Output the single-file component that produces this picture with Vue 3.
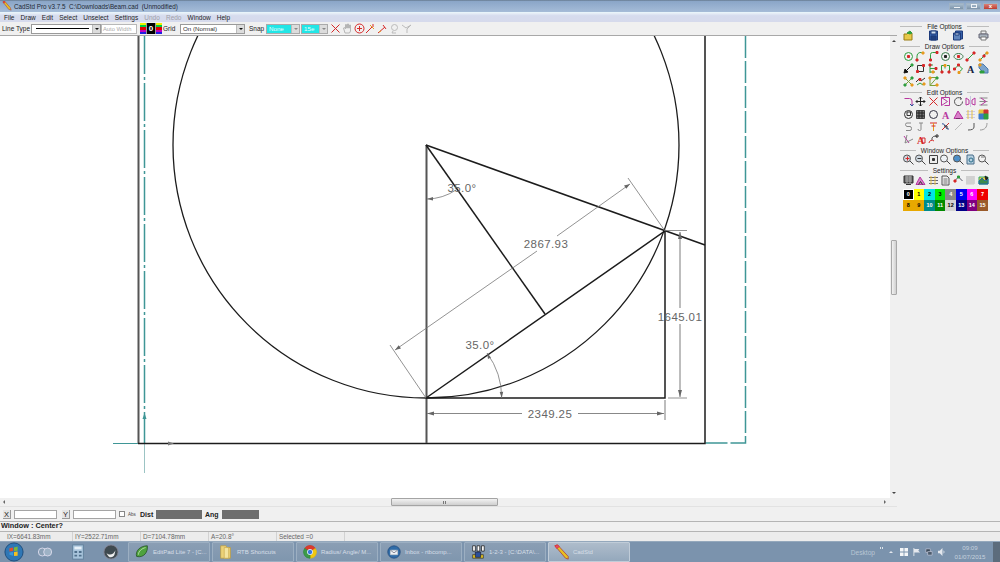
<template>
  <div class="app">
    <div class="titlebar">
      <svg class="title-icon" viewBox="0 0 12 12"><path d="M1 1l2-1 7 8 1 3-3-1z" fill="#e8c020" stroke="#a33" stroke-width=".6" /><path d="M1 1l2-1 1 1.500-2 1.500z" fill="#d33" /></svg>
      <span class="title-text">CadStd Pro v3.7.5&nbsp; C:\Downloads\Beam.cad&nbsp; (Unmodified)</span>
      <div class="win-btns">
        <span class="win-btn"><i class="win-min" /></span>
        <span class="win-btn"><i class="win-max" /></span>
        <span class="win-btn win-close">x</span>
      </div>
    </div>

    <div class="menubar">
      <span v-for="m in menus" :key="m.name" class="menu-item" :class="{ 'menu-item--off': m.off }">{{ m.name }}</span>
    </div>

    <div class="middle">
      <div class="left-col">
        <div class="toolbar">
          <span class="tb-label tb-line">Line Type</span>
          <div class="combo combo--line"><i class="thick-line" /><b class="combo-arrow" /></div>
          <div class="auto-width">Auto Width</div>
          <div class="color-btn">
            <i class="rainbow" /><b class="color-zero">0</b><i class="rainbow" />
          </div>
          <span class="tb-label tb-grid">Grid</span>
          <div class="combo combo--grid"><span>On (Normal)</span><b class="combo-arrow" /></div>
          <span class="tb-label tb-snap">Snap</span>
          <div class="combo combo--cyan combo--none"><span>None</span><b class="combo-arrow combo-arrow--pale" /></div>
          <div class="combo combo--cyan combo--deg"><span>15e</span><b class="combo-arrow combo-arrow--pale" /></div>
          <div class="tb-icons">
            <svg v-for="(ic, i) in toolIcons" :key="i" class="icon" viewBox="0 0 11 11">
              <path v-for="(p, j) in ic" :key="j" :d="p[0]" :stroke="p[1]" :fill="p[2] || 'none'" />
            </svg>
          </div>
        </div>

        <div class="canvas-row">
          <svg class="canvas" viewBox="0 36 890 462">
            <!-- construction lines -->
            <g fill="none" stroke="#3f9696" stroke-width="1.500">
              <path d="M144.500 36V443" stroke-dasharray="38 3 3 3" />
              <path d="M745.500 36V443H705" stroke-dasharray="22 3" />
              <path d="M113 443.500H138" stroke-width="1" />
              <path d="M144.500 443V473" stroke="#9cc4c4" stroke-width="1" />
            </g>
            <!-- beam -->
            <g fill="none" stroke="#1c1c1c" stroke-width="1.500">
              <path d="M138.500 36V443" stroke="#555" stroke-width="2" />
              <path d="M705 36V443.500H138" />
              <path d="M426.500 145V443" stroke="#555" stroke-width="2" />
              <circle cx="426" cy="145" r="253" stroke-width="1.300" />
              <path d="M426 145L705 245" />
              <path d="M426 398L665 231V398H426" />
              <path d="M426 145L545 314" />
            </g>
            <!-- dimensions -->
            <g fill="none" stroke="#777" stroke-width=".8">
              <path d="M630 184L557 236M537 251L395 350" />
              <path d="M628 178L665 231M390 345L426 398" />
              <path d="M665 230.500H687M668 398H687" />
              <path d="M680 232V308M680 324V397" stroke="#888" stroke-width="1.100" />
              <path d="M427 413.500H522M578 413.500H664M665 400V420" stroke="#888" stroke-width="1.100" />
              <path d="M427 199A54 54 0 0 0 456 190" />
              <path d="M487 353A76 76 0 0 1 501.700 398" />
            </g>
            <g fill="#666">
              <path d="M427 413.500l7-2v4zM664 413.500l-7-2v4z" />
              <path d="M680 232l-2 7h4zM680 397l-2-7h4z" />
              <path d="M630 184l-6 1.500 2.300 3.300zM395 350l6-1.500-2.300-3.300z" />
              <path d="M427 199l6-2v3.500zM487 353l1 6 3-1.500zM501.700 398l-2-6 3.500-.3z" />
            </g>
            <g class="dim-text">
              <text x="546" y="248">2867.93</text>
              <text x="680" y="320.500">1645.01</text>
              <text x="550" y="417.500">2349.25</text>
              <text x="462" y="191.500">35.0°</text>
              <text x="480" y="349">35.0°</text>
            </g>
            <path d="M168 441.500l6 2-6 2z" fill="#777" />
            <path d="M144.500 413l-2 6h4z" fill="#3f9696" />
          </svg>
          <div class="vscroll">
            <b class="arrow-up" />
            <div class="vthumb" />
            <b class="arrow-down" />
          </div>
        </div>

        <div class="hscroll">
          <b class="arrow-left" />
          <div class="hthumb"><span /></div>
          <b class="arrow-right" />
        </div>
      </div>

      <aside class="panel">
        <section v-for="s in sections" :key="s.title" class="panel-sec">
          <h4 class="sec-title"><span>{{ s.title }}</span></h4>
          <div class="sec-icons">
            <svg v-for="(ic, i) in s.icons" :key="i" class="icon" viewBox="0 0 11 11">
              <template v-for="(p, j) in ic" :key="j">
                <text v-if="p[3]" class="icon-letter" x="5.500" y="9.500" :fill="p[1]">{{ p[3] }}</text>
                <path v-else :d="p[0]" :stroke="p[1]" :fill="p[2] || 'none'" />
              </template>
            </svg>
          </div>
        </section>
        <div class="palette">
          <span
            v-for="c in palette"
            :key="c.n"
            class="swatch"
            :class="{ 'swatch--active': c.n === 0 }"
            :style="{ background: c.bg, color: c.fg }"
          >{{ c.n }}</span>
        </div>
      </aside>
    </div>

    <div class="coordbar">
      <span class="xy-btn">X</span>
      <i class="xy-input" />
      <span class="xy-btn xy-btn--y">Y</span>
      <i class="xy-input" />
      <i class="abs-check" />
      <span class="abs-label">Abs</span>
      <b class="coord-label">Dist</b>
      <i class="readout readout--dist" />
      <b class="coord-label">Ang</b>
      <i class="readout readout--ang" />
    </div>

    <div class="prompt">Window : Center?</div>

    <div class="statusbar">
      <span v-for="c in statusCells" :key="c" class="status-cell">{{ c }}</span>
    </div>

    <div class="taskbar">
      <div class="start-orb"><svg viewBox="0 0 22 22"><circle cx="11" cy="11" r="10" fill="#2f77b5" stroke="#1c4a78" /><path d="M6 7l4-1v4l-4 .5z" fill="#e2502e" /><path d="M11 6l4-1v4.500l-4 .5z" fill="#7cb83c" /><path d="M6 11.500l4-.5v4l-4-1z" fill="#3a9ade" /><path d="M11 11l4-.5V15l-4 .5z" fill="#f4c020" /></svg></div>
      <div class="pinned"><svg viewBox="0 0 18 18"><circle cx="6" cy="9" r="4.500" fill="#8aa0b5" stroke="#dde" /><circle cx="12" cy="9" r="4.500" fill="#9db2c5" stroke="#dde" /></svg></div>
      <div class="pinned"><svg viewBox="0 0 18 18"><rect x="3" y="1" width="12" height="16" fill="#a8c4dc" stroke="#5f7f9a" /><rect x="5" y="3" width="8" height="3" fill="#e6f0f8" /><path d="M5 8h3v2H5zM10 8h3v2h-3zM5 12h3v2H5zM10 12h3v2h-3z" fill="#50708c" /></svg></div>
      <div class="pinned"><svg viewBox="0 0 18 18"><circle cx="9" cy="9" r="8" fill="#3f4a50" stroke="#889" /><path d="M4 10c3 3 8 2 10-3-1 5-1 7-5 8-2 0-4-2-5-5z" fill="#eee" /></svg></div>
      <div
        v-for="t in tasks"
        :key="t.label"
        class="task"
        :class="{ 'task--active': t.active }"
      >
        <svg class="task-icon" viewBox="0 0 18 18">
          <path v-for="(p, j) in t.icon" :key="j" :d="p[0]" :stroke="p[1]" :fill="p[2] || 'none'" />
        </svg>
        <span>{{ t.label }}</span>
      </div>
      <div class="tray">
        <span class="tray-desktop">Desktop</span>
        <i class="tray-grip" />
        <b class="tray-up" />
        <svg class="tray-icon" viewBox="0 0 9 9"><path d="M0 0h4v4H0zM5 0h4v4H5zM0 5h4v4H0zM5 5h4v4H5z" fill="#f4f6f8" /></svg>
        <svg class="tray-icon" viewBox="0 0 9 9"><path d="M1 0v9" stroke="#e4e8ee" /><path d="M1 1h6L6 3l2 2H1z" fill="#e4e8ee" /></svg>
        <svg class="tray-icon" viewBox="0 0 9 9"><path d="M1 1h5v4H1z" fill="#3c4c5c" stroke="#dde" stroke-width=".6" /><path d="M3 4h5v4H3z" fill="#4c5c6c" stroke="#dde" stroke-width=".6" /></svg>
        <svg class="tray-icon" viewBox="0 0 9 9"><path d="M0 3h2l3-3v9L2 6H0z" fill="#e4e8ee" /><path d="M6 3c1 1 1 2 0 3" stroke="#e4e8ee" fill="none" /></svg>
        <div class="clock"><span>09:09</span><span>01/07/2015</span></div>
        <i class="show-desktop" />
      </div>
    </div>
  </div>
</template>

<script setup>
const menus = [
  { name: 'File' }, { name: 'Draw' }, { name: 'Edit' }, { name: 'Select' }, { name: 'Unselect' },
  { name: 'Settings' }, { name: 'Undo', off: true }, { name: 'Redo', off: true }, { name: 'Window' }, { name: 'Help' },
]

const G = '#2f9e3f', R = '#d62828', O = '#e79a1e', M = '#b8379f', K = '#333', S = '#888', B = '#2a4f9a'

const mag = (inner, lens = '#cfd9e2') => [
  ['M7 7l3.500 3.500', '#444'],
  ['M7.500 4.500a3.500 3.500 0 1 1-7 0a3.500 3.500 0 1 1 7 0', '#555', lens],
  ...inner,
]

const toolIcons = [
  [['M1.500 1.500l8 8M9.500 1.500l-8 8', R]],
  [['M3 10L1.500 5l1-.5 1 1.500V1.500h1V5h1V1h1v4h1V2h1v6l-1 2z', '#b5b5b5']],
  [['M10 5.500a4.500 4.500 0 1 1-9 0a4.500 4.500 0 1 1 9 0', R], ['M5.500 3v5M3 5.500h5', R]],
  [['M1 10l6-6', R], ['M5 2l4 4', O], ['M8 1v3', R]],
  [['M1 10l7-6', R], ['M6 2l3 4', R], ['M2 9l2-1', O]],
  [['M8.500 4.500a3 3 0 1 1-6 0a3 3 0 1 1 6 0', '#bbb'], ['M4 8l-1 2h4', '#bbb']],
  [['M1 2l4 3 5-3-4 4v4', '#bbb']],
]

const sections = [
  {
    title: 'File Options',
    icons: [
      [['M1 4h3l1-1h4v7H1z', '#9a7d14', '#e8c94a'], ['M4 3l3-2 2 2-2 1z', G, G]],
      [],
      [['M1.500 1h8v9h-8z', '#1d3a7a', '#3560a8'], ['M3 1h5v3H3z', '#1d3a7a', '#cfe0f0'], ['M3 6h5v4H3z', '#1d3a7a', '#20407f']],
      [],
      [['M2.500 1h7v8h-7z', '#1d3a7a', '#3560a8'], ['M.5 3h7v7h-7z', '#1d3a7a', '#5f84bb'], ['M2 3h4v2H2z', '#1d3a7a', '#dce8f4']],
      [],
      [['M3 1h5v3H3z', '#777', '#eee'], ['M1 4h9v4H1z', '#667', '#a8b2bc'], ['M3 7h5v3H3z', '#777', '#fff']],
    ],
  },
  {
    title: 'Draw Options',
    icons: [
      [['M9.500 5.500a4 4 0 1 1-8 0a4 4 0 1 1 8 0', G], ['M4.500 4.500h2v2h-2z', R, R]],
      [['M2 9V5a3.500 3.500 0 0 1 6-2.500', G], ['M1 8h2v2H1z', R, R], ['M7 1h2v2H7z', O, O]],
      [['M2.500 9V3.500A2 2 0 0 1 4.500 1.500H8', G], ['M1.500 8h2v2h-2z', R, R], ['M8 .5h2v2H8z', R, R]],
      [['M9.500 5.500a4 4 0 1 1-8 0a4 4 0 1 1 8 0', '#3a7a4a'], ['M4.500 4.500h2v2h-2z', '#222', '#222']],
      [['M10 5.500c0 1.500-2 3-4.500 3S1 7 1 5.500s2-3 4.500-3 4.500 1.500 4.500 3', '#3a7a4a'], ['M4.500 4.500h2v2h-2z', R, R]],
      [['M2 9l7-7', G], ['M1 8h2v2H1z', R, R], ['M8 1h2v2H8z', R, R]],
      [['M1.500 9.500L5 6l1-2 3.500-2.500', G], ['M1 8h2v2H1z', O, O], ['M5 4h2v2H5z', R, R], ['M8 1h2v2H8z', O, O]],
      [['M9 2L3 8', '#111'], ['M1 10l1-4 3 3z', '#111', '#111'], ['M8 1h2v2H8z', G, G]],
      [['M2.500 2.500h6v6h-6z', K], ['M1.500 7.500h2v2h-2z', R, R], ['M7.500 1.500h2v2h-2z', R, R]],
      [['M2 1v9M2 2h3M2 5.500h6M2 9h5', G], ['M1 1h2v2H1zM7 4.500h2v2H7z', R, R], ['M4 8h2v2H4z', O, O]],
      [['M1.500 9V2.500h3.500v3M7 2.500h2.500V9', G], ['M1 8h2v2H1zM8 8h2v2H8z', R, R], ['M4 1.500h2v2H4z', O, O]],
      [['M1.500 6L5.500 2l4 4-4 3.500', G], ['M.5 5h2v2h-2zM4.500 1h2v2h-2z', R, R], ['M5 8.500h2v2H5z', O, O]],
      [['', '#16223f', '', 'A']],
      [['M1 1h4l5 5v4H6L1 5z', '#4a7ab0', '#7ca4cc'], ['M2 8h4v2H2z', G, G], ['M1 1h2v2H1z', O, O]],
      [['M1.500 9.500l8-8M1.500 1.500l8 8', '#7aa23c'], ['M1 1h2v2H1zM8 8h2v2H8z', O, O], ['M8 1h2v2H8zM1 8h2v2H1z', G, G]],
      [['M1 6l3-3 2 2 4-3', K], ['M2 9l3-2 3 2', G], ['M4 2.500h2v2H4z', R, R], ['M8 7h2v2H8z', O, O]],
      [['M2 1.500h7M2 9.500h7M2 1.500v8M9 1.500l-7 8', '#7aa23c'], ['M1 1h2v2H1zM8 8h2v2H8z', O, O], ['M8 1h2v2H8z', G, G]],
    ],
  },
  {
    title: 'Edit Options',
    icons: [
      [['M1.500 2.500h5a2.500 2.500 0 0 1 2.500 2.500V10', M], ['M7 8l2 2 1.500-2', '#2a4f9a']],
      [['M5.500 1v9M1 5.500h9M4 2.500L5.500 1 7 2.500M4 8.500L5.500 10 7 8.500M2.500 4L1 5.500 2.500 7M8.500 4L10 5.500 8.500 7', '#222']],
      [['M1.500 1.500l8 8M9.500 1.500l-8 8', R]],
      [['M1.500 1.500h8v8h-5', M], ['M1.500 1.500l6 4-6 4z', M]],
      [['M9.500 5.500a4 4 0 1 1-1.500-3', '#555'], ['M7 1l1.500 1.500-1 1.500', '#555']],
      [['M5.500 0v11', '#c7c7e0'], ['M1 2l3 2v4l-3 1z', M], ['M10 2L7 4v4l3 1z', M]],
      [['M1.500 2h8M1.500 5.500h8M1.500 9h8', S], ['M3 2l5 3.500L3 9', M]],
      [['M9.500 5.500a4 4 0 1 1-8 0a4 4 0 1 1 8 0', '#333'], ['M4 3h3.500v3.500H4z', '#333']],
      [['M1.500 1.500h8v8h-8z', '#444', '#777'], ['M1.500 4h8M1.500 7h8M4 1.500v8M7 1.500v8', '#222']],
      [['M9.500 5.500a4 4 0 1 1-8 0a4 4 0 1 1 8 0', '#334']],
      [['', M, '', 'A']],
      [['M1 9.500L5 2l5 7.500z', M, '#d97fc9'], ['M3 9.500h4', '#7b2a6c']],
      [['M1 2.500h9M1 5.500h9M1 8.500h9', '#c9c9ee'], ['M3 1v9M7 1v9', '#e6c040']],
      [['M1 1h5v4H1z', '#e6c040', '#e6c040'], ['M6 1h4v4H6z', '#c33', '#c33'], ['M1 5h5v5H1z', '#3c7ac8', '#3c7ac8'], ['M6 5h4v5H6z', G, G]],
      [['M8 2H4Q2.500 2 2.500 3.500T4 5.500h3Q8.500 5.500 8.500 7.500T7 9.500H3', S]],
      [['M4 2h4M6 2v6.500Q6 9.500 4.500 9.500T3 8', S]],
      [['M2 2h7', R], ['M5.500 2v8', O], ['M3.500 5h4', R]],
      [['M2 9L9 2', R], ['M2 3c3-2 3 6 7 5', B], ['M4 5h3v3', K]],
      [['M2 9L9 2', '#bbb']],
      [['M9 2v4Q9 9 3 9', '#555']],
      [['M9 2c0 4-2 7-7 7', '#999']],
      [['M1 2l5 7', M], ['M4 1l-2 8 8-4', S]],
      [['', R, '', 'A'], ['M7 4h3v5H7z', R]],
      [['M1 9a3 3 0 0 1 5-2', R], ['M4 6a3 3 0 0 1 5-3', '#555'], ['M8 1h2v2H8z', K]],
    ],
  },
  {
    title: 'Window Options',
    icons: [
      mag([['M2.500 4.500h4M4.500 2.500v4', R]]),
      mag([['M2.500 4.500h4', '#333']]),
      [['M1.500 1.500h8v8h-8z', '#444', '#eee'], ['M4.500 4.500h2v2h-2z', '#333', '#333']],
      mag([], '#eef2f6'),
      mag([], '#4e8fc8'),
      [['M2 1h6l1 2v7H2z', '#4a6e8a', '#b8d0e0'], ['M8 6a2 2 0 1 1-4 0a2 2 0 1 1 4 0', '#2a6e8a']],
      mag([['M3 3h3', '#777']], '#f2f2f2'),
    ],
  },
  {
    title: 'Settings',
    icons: [
      [['M1 1h9v7H1z', '#333', '#555'], ['M2 2h7M2 4h7M2 6h7M4 1v7M7 1v7', '#aaa'], ['M3 9.500h5', '#333']],
      [['M1 9.500L5 2l5 7.500z', M, '#d97fc9'], ['M3.500 9.500l2-3 2 3', '#333']],
      [['M1 2.500h9M1 5.500h9M1 8.500h9', '#667'], ['M3 1v9M7 1v9', '#e6c040']],
      [['M2 1h5l2 2v7H2z', '#555', '#eee'], ['M3.500 4h4M3.500 6h4M3.500 8h4', '#777']],
      [['M1.500 6L5.500 2l4 4', '#556'], ['M1 5h2v2H1z', R, R], ['M4.500 1h2v2h-2z', G, G]],
      [['M1 2h9M1 4h9M1 6h9M1 8h9', '#bbb'], ['M2 1v9M4 1v9M6 1v9M8 1v9', '#ccc']],
      [['M1 2h9v7H1z', '#3a6', '#e8d040'], ['M1 6l3-3 3 3 3-2v5H1z', '#26a', '#3c8a4a'], ['M7 1l3 2-2 2z', '#222', '#222']],
    ],
  },
]

const paletteColors = [
  ['#000', '#fff'], ['#ffff00', '#000'], ['#00e5e5', '#000'], ['#00ee00', '#000'],
  ['#8a8a8a', '#fff'], ['#0000ee', '#fff'], ['#ff00ff', '#fff'], ['#ee0000', '#fff'],
  ['#e8a800', '#000'], ['#e8a800', '#000'], ['#008a8a', '#fff'], ['#008a00', '#fff'],
  ['#d4d4d4', '#000'], ['#000088', '#fff'], ['#800080', '#fff'], ['#9a5a2a', '#fff'],
]
const palette = paletteColors.map(([bg, fg], n) => ({ n, bg, fg }))

const statusCells = ['IX=6641.83mm', 'IY=2522.71mm', 'D=7104.78mm', 'A=20.8°', 'Selected =0']

const tasks = [
  { label: 'EditPad Lite 7 - [C...', icon: [['M3 14C1 8 7 2 15 2c1 7-4 14-12 12z', '#1f4a1f', '#4ea23e'], ['M5 12C5 8 9 5 13 4', '#d8ecc8']] },
  { label: 'RTB Shortcuts', icon: [['M3 2h6l1 2h4v12H3z', '#b89a40', '#ecd278'], ['M7 4h5v12H7z', '#c9aa50', '#f4e4a0']] },
  { label: 'Radius/ Angle/ M...', icon: [
    ['M9 9L3 5A7 7 0 0 1 15 5z', '#c9392c', '#dc3a2c'],
    ['M9 9L15 5A7 7 0 0 1 9 16z', '#e0b80f', '#f2c80f'],
    ['M9 9V16A7 7 0 0 1 3 5z', '#2f8a3c', '#3c9a48'],
    ['M12 9a3 3 0 1 1-6 0a3 3 0 1 1 6 0', '#fff', '#3a78dc'],
  ] },
  { label: 'Inbox - rtbcomp...', icon: [['M16 9A7 7 0 1 1 2 9a7 7 0 1 1 14 0', '#20487a', '#2f6ca8'], ['M5 7h8v5H5z', '#ccc', '#eef2f6'], ['M5 7l4 3 4-3', '#667']] },
  { label: '1-2-3 - [C:\\DATA\\...', icon: [['M3 12h12v4H3z', '#333', '#e8c820'], ['M6 9h6v6H6z', '#223', '#2a4f9a'], ['M3 2h3v6H3zM8 2h3v6H8zM13 2h3v6h-3z', '#111', '#fff']] },
  { label: 'CadStd', active: true, icon: [['M1 2l3-1 12 13 0 3-3-1z', '#a33', '#e8c020'], ['M1 2l3-1 2 2-3 2z', '#d33', '#e24a6a']] },
]
</script>

<style>
html, body { margin: 0; background: #f0f0f0; }
</style>

<style scoped>
.app {
  width: 1000px; height: 562px; overflow: hidden;
  display: flex; flex-direction: column;
  font-family: "Liberation Sans", Arial, sans-serif; font-size: 8px; color: #222;
  background: #f0f0f0;
}

.titlebar {
  height: 12px; flex-shrink: 0;
  display: flex; align-items: center; padding-left: 2px;
  background: linear-gradient(#64788c 0, #8ba6c8 12%, #a5bcd8 100%);
}
.title-icon { width: 10px; height: 10px; }
.title-text { margin-left: 2px; font-size: 6.300px; color: #1c2733; white-space: nowrap; }
.win-btns { margin-left: auto; margin-right: 2px; display: flex; gap: 2px; }
.win-btn {
  width: 15px; height: 7px; display: flex; align-items: center; justify-content: center;
  background: linear-gradient(#a8bccd, #7d94aa); border: 1px solid #9fb2c4; box-sizing: border-box;
  font-size: 6px; line-height: 5px; color: #fff;
}
.win-close { background: linear-gradient(#d88278, #bf3c30); font-weight: bold; }
.win-min { width: 6px; height: 1px; background: #eef2f6; margin-top: 2px; }
.win-max { width: 6px; height: 4px; border: 1px solid #eef2f6; box-sizing: border-box; }

.menubar {
  height: 10px; flex-shrink: 0; box-sizing: border-box;
  display: flex; align-items: center; gap: 6.100px; padding-left: 4px;
  background: linear-gradient(#e8f0f8 0, #d6dcee 30%, #d6daec 100%);
  border-top: 1px solid #e8f4fa;
}
.menu-item { font-size: 6.500px; color: #1d1d1d; }
.menu-item--off { color: #a0a0a8; }

.middle { flex: 1; min-height: 0; display: flex; }
.left-col { width: 897px; display: flex; flex-direction: column; }

.toolbar {
  height: 14px; flex-shrink: 0; box-sizing: border-box;
  display: flex; align-items: center; padding-left: 2px;
  background: #f0f0f0; border-bottom: 1px solid #a8a8a8;
}
.tb-label { font-size: 6.500px; color: #222; white-space: nowrap; }
.tb-line { width: 27px; }
.tb-grid { width: 13px; margin-left: 1px; }
.tb-snap { width: 15px; margin-left: 4px; }
.combo {
  height: 10px; box-sizing: border-box; display: flex; align-items: center; flex-shrink: 0;
  background: #fff; border: 1px solid #9a9a9a; font-size: 6.200px; color: #333; padding-left: 2px;
}
.combo span { flex: 1; overflow: hidden; white-space: nowrap; }
.combo--line { width: 70px; margin-left: 2px; }
.thick-line { flex: 1; height: 1.500px; background: #000; margin: 0 3px 0 2px; }
.combo-arrow {
  width: 8px; height: 8px; flex-shrink: 0; position: relative;
  background: #dcdcdc; border-left: 1px solid #bbb; box-sizing: border-box;
}
.combo-arrow::after {
  content: ''; position: absolute; left: 1.500px; top: 3px;
  border: 2px solid transparent; border-top: 2.500px solid #111; border-bottom: 0;
}
.combo-arrow--pale::after { border-top-color: #888; }
.auto-width {
  width: 36px; height: 10px; box-sizing: border-box; line-height: 8px; flex-shrink: 0;
  border: 1px solid #b8b8b8; background: #fff;
  font-size: 5.800px; color: #aaa; padding-left: 1px; white-space: nowrap; overflow: hidden;
}
.color-btn { display: flex; margin-left: 3px; height: 11px; width: 22px; flex-shrink: 0; }
.rainbow { width: 6px; background: linear-gradient(#f0f000 0 20%, #00cc44 20% 40%, #e00000 40% 60%, #c000c0 60% 80%, #2020e0 80%); }
.color-zero {
  width: 10px; background: #000; color: #fff; font-size: 8px; line-height: 11px; text-align: center;
  border-left: 1px solid #999; border-right: 1px solid #999; box-sizing: border-box;
}
.combo--grid { width: 65px; margin-left: 4px; }
.combo--cyan { background: #22e6e6; color: #e8ffff; border-color: #aaa; }
.combo--none { width: 34px; margin-left: 2px; }
.combo--deg { width: 27px; margin-left: 1px; }
.tb-icons { display: flex; gap: .800px; margin-left: 2px; }

.icon { width: 11px; height: 11px; display: block; justify-self: center; }
.icon path { stroke-width: 1; }
.icon-letter { font-family: "Liberation Serif", serif; font-size: 10px; font-weight: bold; text-anchor: middle; }

.canvas-row { flex: 1; min-height: 0; display: flex; }
.canvas { width: 890px; height: 462px; display: block; background: #fff; flex-shrink: 0; }
.dim-text text {
  font-family: "Liberation Sans", Arial, sans-serif; font-size: 11.500px; fill: #666;
  text-anchor: middle; letter-spacing: .4px;
}

.vscroll { flex: 1; display: flex; flex-direction: column; align-items: center; background: #f0f0f0; }
.vthumb {
  width: 6px; height: 55px; margin-top: 198px; box-sizing: border-box;
  background: linear-gradient(90deg, #f2f2f2, #d0d0d0); border: 1px solid #a8a8a8; border-radius: 1px;
}
.arrow-up, .arrow-down, .arrow-left, .arrow-right { width: 0; height: 0; border: 2px solid transparent; }
.arrow-up { margin-top: 4px; border-bottom: 2.500px solid #444; border-top: 0; }
.arrow-down { margin-top: auto; margin-bottom: 4px; border-top: 2.500px solid #444; border-bottom: 0; }
.arrow-left { border-right: 2.500px solid #666; border-left: 0; margin-left: 3px; }
.arrow-right { border-left: 2.500px solid #666; border-right: 0; margin-left: auto; margin-right: 11px; }

.hscroll {
  height: 9px; flex-shrink: 0; box-sizing: border-box;
  display: flex; align-items: center;
  background: #f0f0f0; border-bottom: 1px solid #e2e2e2;
}
.hthumb {
  width: 107px; height: 8px; margin-left: 386px; box-sizing: border-box;
  display: flex; align-items: center; justify-content: center;
  background: linear-gradient(#f2f2f2, #cfcfcf); border: 1px solid #a4a4a4; border-radius: 1px;
}
.hthumb span { width: 4px; height: 3px; background: repeating-linear-gradient(90deg, #777 0 1px, transparent 1px 2px); }

.panel { flex: 1; padding-top: .5px; background: #f0f0f0; }
.panel-sec { margin-bottom: 1px; }
.sec-title {
  margin: 0 11px 0 3px; height: 7px; line-height: 7px;
  display: flex; align-items: center; gap: 5px;
  font-size: 6.500px; font-weight: normal; color: #222; white-space: nowrap;
}
.sec-title::before, .sec-title::after { content: ''; flex: 1; height: 1px; background: #bdbdbd; }
.sec-icons {
  display: grid; grid-template-columns: repeat(7, 12.500px); grid-auto-rows: 12.500px;
  align-items: center; margin-left: 5px;
}
.sec-icons .icon:empty { visibility: hidden; }

.palette {
  display: grid; grid-template-columns: repeat(8, 10.600px); grid-auto-rows: 11px;
  margin: 2px 0 0 6px; width: 85px;
}
.swatch { font-size: 5.500px; font-weight: bold; text-align: center; line-height: 11px; }
.swatch--active { outline: 1px solid #fff; outline-offset: -1.500px; }

.coordbar {
  height: 15px; flex-shrink: 0; box-sizing: border-box;
  display: flex; align-items: center; padding-left: 3px;
  background: #f0f0f0; border-bottom: 1px solid #b4b4b4;
}
.xy-btn {
  width: 8px; height: 9px; line-height: 9px; text-align: center; box-sizing: border-box; flex-shrink: 0;
  background: #e4e4e4; border: 0 solid #999; border-width: 0 1px 1px 0;
  font-size: 7.500px; color: #222;
}
.xy-btn--y { margin-left: 5px; }
.xy-input {
  width: 43px; height: 9px; margin-left: 3px; box-sizing: border-box; flex-shrink: 0;
  background: #fff; border: 1px solid #a4a4a4;
}
.abs-check { width: 6px; height: 6px; margin-left: 3px; background: #fff; border: 1px solid #888; box-sizing: border-box; flex-shrink: 0; }
.abs-label { margin-left: 3px; width: 9px; font-size: 4.500px; color: #444; }
.coord-label { margin-left: 3px; width: 14px; font-size: 7px; color: #222; white-space: nowrap; }
.readout { height: 9px; margin-left: 2px; background: #6e6e6e; }
.readout--dist { width: 46px; }
.readout--ang { width: 37px; margin-left: 3px; }

.prompt {
  height: 10px; flex-shrink: 0; box-sizing: border-box; line-height: 8px;
  font-size: 7.300px; font-weight: bold; color: #222; padding-left: 1px;
  background: #f0f0f0; border-bottom: 1px solid #b4b4b4;
}

.statusbar {
  height: 9px; flex-shrink: 0; display: flex; padding-left: 5px;
  background: #ececec;
}
.status-cell {
  width: 68px; box-sizing: border-box; padding-left: 2px; line-height: 9px;
  font-size: 6.400px; color: #666; border-right: 1px solid #d2d2d2; white-space: nowrap;
}

.taskbar {
  height: 21px; flex-shrink: 0; box-sizing: border-box;
  display: flex; align-items: stretch;
  background: #7b93ad; border-top: 1px solid #94a8bc;
}
.start-orb { width: 28px; flex-shrink: 0; display: flex; align-items: center; justify-content: center; }
.start-orb svg { width: 20px; height: 20px; }
.pinned { width: 33.300px; flex-shrink: 0; display: flex; align-items: center; justify-content: center; }
.pinned svg { width: 16px; height: 16px; }
.task {
  width: 82px; margin-right: 2px; box-sizing: border-box; padding-left: 5px; flex-shrink: 0;
  display: flex; align-items: center; gap: 3px;
  background: linear-gradient(#8a9eb4, #7f96ae); border: 1px solid #9cafc2; border-radius: 1px;
  font-size: 6px; color: #d6dfe8; white-space: nowrap; overflow: hidden;
}
.task--active { background: linear-gradient(#aebccb, #94a8bc); border-color: #c0ccd8; }
.task-icon { width: 16px; height: 16px; flex-shrink: 0; }
.task-icon path { stroke-width: .8; }
.tray { flex: 1; min-width: 0; display: flex; align-items: center; }
.tray-desktop { margin-left: auto; font-size: 6.600px; color: #b8c6d4; }
.tray-grip {
  width: 3px; height: 2px; margin: -8px 0 0 5px;
  background: repeating-linear-gradient(90deg, #dde4ea 0 1px, transparent 1px 2px);
}
.tray-up { margin: 0 7px 0 6px; border: 2px solid transparent; border-bottom: 2.500px solid #e4e8ee; border-top: 0; }
.tray-icon { width: 8px; height: 8px; margin-right: 4.500px; flex-shrink: 0; }
.clock {
  display: flex; flex-direction: column; align-items: center; width: 40px; flex-shrink: 0; margin-right: 3px;
  font-size: 6.200px; line-height: 9px; color: #c6d2de;
}
.show-desktop { width: 7px; height: 100%; flex-shrink: 0; background: #5c6c7c; }
</style>
